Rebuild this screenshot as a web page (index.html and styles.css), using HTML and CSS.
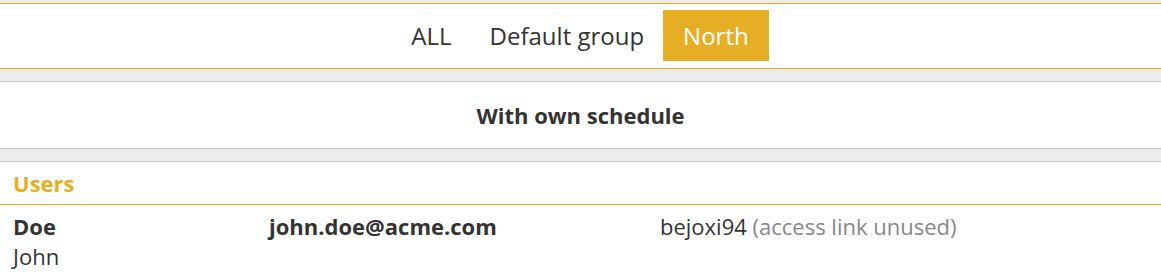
FILE: index.html
```html
<!DOCTYPE html>
<html lang="en">
<head>
    <meta charset="UTF-8">
    <meta name="viewport" content="width=device-width, initial-scale=1.0">
    <title>Groups</title>
    <link rel="stylesheet" href="styles.css">
</head>
<body>

    <div class="top-strip"></div>

    <nav class="group-tabs">
        <a class="tab">ALL</a>
        <a class="tab">Default group</a>
        <a class="tab active">North</a>
    </nav>

    <div class="spacer"></div>

    <div class="schedule-title">With own schedule</div>

    <div class="spacer"></div>

    <div class="section-head">Users</div>

    <div class="user-row">
        <div class="user-name">
            <b>Doe</b>
            <span>John</span>
        </div>
        <div class="user-email">john.doe@acme.com</div>
        <div class="user-login">bejoxi94 <span class="muted">(access link unused)</span></div>
    </div>

</body>
</html>
```

FILE: styles.css
```css
body {
    font-family: 'Open Sans', 'DejaVu Sans', sans-serif;
    color: #333;
    background-color: #fff;
    margin: 0;
}

.top-strip {
    height: 3px;
    background-color: #ececec;
}

.group-tabs {
    display: flex;
    justify-content: center;
    align-items: flex-start;
    height: 58px;
    padding-top: 6px;
    border-top: 1px solid #e6ac1c;
    border-bottom: 1px solid #e6ac1c;
}

.tab {
    font-size: 24px;
    line-height: 51px;
    padding: 0 19px;
    color: #333;
    cursor: pointer;
}

.tab.active {
    background-color: #e6ae24;
    color: #fff;
    padding: 0 20px;
}

.spacer {
    height: 12px;
    background-color: #ececec;
    border-bottom: 1px solid #c8c8c8;
}

.schedule-title {
    height: 66px;
    line-height: 66px;
    text-align: center;
    font-size: 22px;
    font-weight: bold;
    border-bottom: 1px solid #c8c8c8;
}

.section-head {
    height: 42px;
    line-height: 43px;
    padding: 0 13px;
    font-size: 22px;
    font-weight: bold;
    color: #e6ae24;
    border-bottom: 1px solid #e6ac1c;
}

.user-row {
    display: grid;
    grid-template-columns: 256px 391px 1fr;
    padding-top: 6px;
    font-size: 22px;
    line-height: 30px;
}

.user-row > div {
    padding: 0 13px;
}

.user-name {
    display: flex;
    flex-direction: column;
}

.user-email {
    font-weight: bold;
}

.muted {
    color: #888;
}
```
